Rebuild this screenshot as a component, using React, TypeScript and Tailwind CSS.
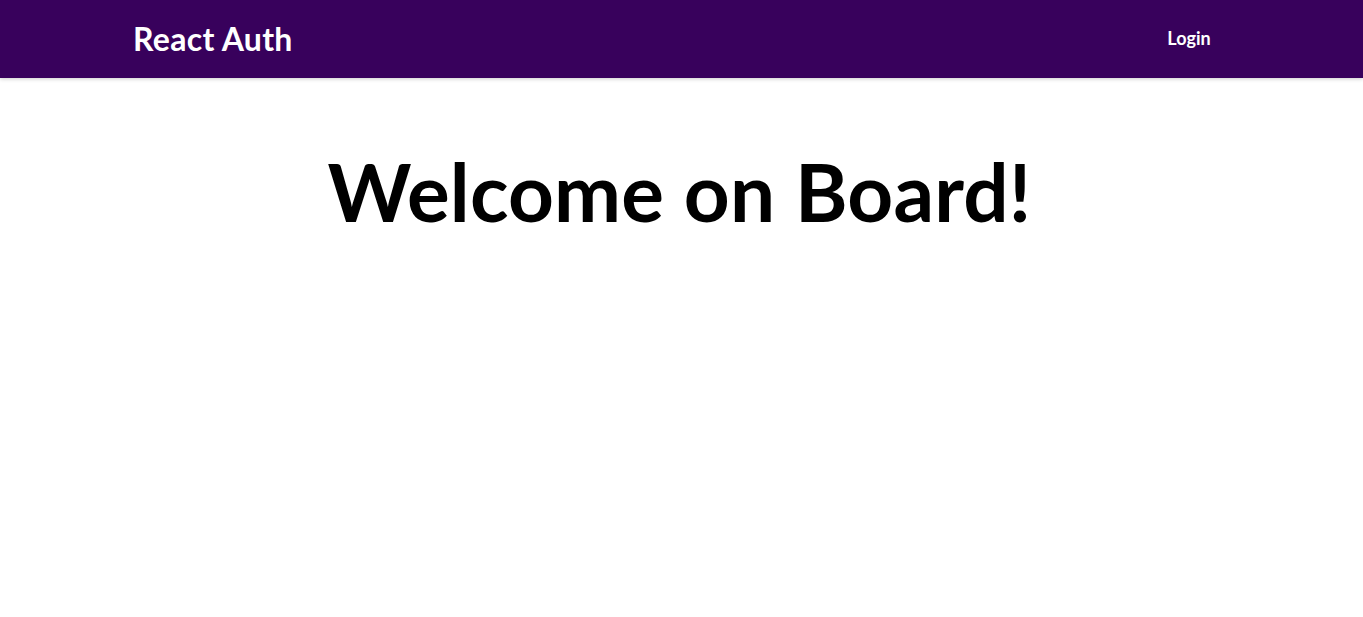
export default function App() {
  return (
    <div className="min-h-screen bg-white font-['Lato',sans-serif]">
      <header className="flex h-[78px] items-center justify-between bg-[#38015c] pl-[133px] pr-[10%] shadow-[0_1px_4px_rgba(0,0,0,0.2)]">
        <a href="#" className="text-[32px] font-bold leading-[1.2] tracking-[0.3px] text-white">
          React Auth
        </a>
        <nav>
          <ul className="flex items-center">
            <li className="mx-4">
              <a href="#" className="text-[18px] font-bold leading-[1.2] text-white">
                Login
              </a>
            </li>
          </ul>
        </nav>
      </header>
      <section className="mt-[65px] pr-1 text-center">
        <h1 className="text-[80px] font-bold leading-[1.2] tracking-[0.2px] text-black">Welcome on Board!</h1>
      </section>
    </div>
  )
}
